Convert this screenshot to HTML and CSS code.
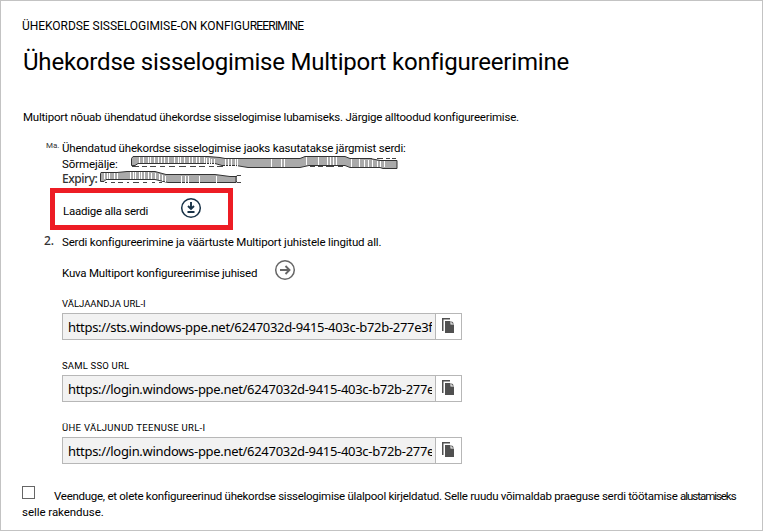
FILE: index.html
```html
<!DOCTYPE html>
<html lang="et">
<head>
<meta charset="utf-8">
<title>Multiport</title>
<link rel="stylesheet" href="styles.css">
</head>
<body>
<main class="dialog">
  <p class="eyebrow line">ÜHEKORDSE SISSELOGIMISE-ON KONFIGU<span class="tight">REERIMINE</span></p>
  <h1 class="title">Ühekordse sisselogimise Multiport konfigureerimine</h1>
  <p class="intro line">Multiport nõuab ühendatud ühekordse sisselogimise lubamiseks. Järgige alltoodud konfigureerimise.</p>
  <section class="step first">
    <span class="marker small">Ma.</span>
    <div class="content">
      <p class="line cert">Ühendatud ühekordse sisselogimise jaoks kasutatakse järgmist serdi:</p>
      <div class="row print"><span class="line">Sõrmejälje:</span>
        <svg class="scribble" width="269" height="16" viewBox="130 154 269 16">
          <path class="ink" d="M132 166.500h7m3 0h5m3 0h6m4 0h5m4 0h6m4 0h7m4 0h6m3 0h6m4 0h5m3 0h6M310 166.500h5m3 0h5m3 0h8m4 0h5M365 158.500h7m5 0h6m3 0h4m2 0h4"/>
          <path class="band" d="M133 156.500H208L220 157.500L225 158.500H300L305 156.500H345L350 158.500H370L380 160.500H397V168.500H383L380 167.500H350L345 165.500H309L300 167.500H248L236 165.500H222L215 163.500H138L135 165.500H131.500V158.500Z"/>
          <path class="bars" d="M139.500 157v6m4-6v6m5-6v6m2-6v6m4-6v6m4-6v6m3-6v6m3-6v6m4-6v6m6-6v6m4-6v6m2-6v6m4-6v6m5-6v6m3-6v6m4-6v6m3-6v6m5-6v6m2-5v6m3-6v7m2-6v6m3-6v6m11-6v7m3-7v7m3-7v7m4-7v7m2-7v8m34-8v8m10-8v8m3-8v8m22-10v8m12-8v8m9-8v8m3-8v8m3-8v8m3-8v8m15-6v8m8-8v8m5-7v7m4-7v7m4-7v7m5-6v6m3-6v6m4-6v6"/>
        </svg>
      </div>
      <div class="row expiry"><span class="line seg">Expiry:</span>
        <svg class="scribble" width="142" height="14" viewBox="100 171 142 14">
          <path class="ink" d="M105 182.500h2m4 0h4m3 0h5m4 0h2m4 0h6m4 0h4m5 0h3m4 0h3M241 175.500h-4l-1 2v3l1 2h4"/>
          <path class="band" d="M101 172.500H117L127 171.500H155L166 174.500H215L230 176.500H236V182.500H168L155 179.500H106L104 181.500H100.500V173.500Z"/>
          <path class="bars" d="M104.500 173v6m3-6v6m2-6v6m5-6v6m3-6v6m13-7v7m3-7v7m2-7v7m4-7v7m2-7v7m3-7v7m4-7v7m3-6v6m4-6v6m4-5v6m3-5v6m3-5v6m16-6v7m4-7v7m3-7v7m11-7v7m17-7v7"/>
        </svg>
      </div>
    </div>
  </section>
  <div class="download">
    <span class="line dl">Laadige alla serdi</span>
    <svg width="22" height="22" viewBox="0 0 22 22" class="round dark"><circle cx="11" cy="11" r="9.300"/><path class="bold" d="M11 5v7M8 9l3 3 3-3M7.500 15h7"/></svg>
  </div>
  <section class="step second">
    <span class="marker seg">2.</span>
    <p class="line serdi">Serdi konfigureerimine ja väärtuste Multiport juhistele lingitud all.</p>
  </section>
  <div class="guide">
    <span class="line kuva">Kuva Multiport konfigureerimise juhised</span>
    <svg width="22" height="22" viewBox="0 0 22 22" class="round gray"><circle cx="11" cy="11" r="9.300"/><path class="bold" d="M6 11h9M11.500 7l4 4-4 4"/></svg>
  </div>
  <section class="fields">
    <div class="field"><p class="label l1">VÄLJAANDJA URL-I</p>
      <div class="control"><span class="value"><span class="clip">https://sts.windows-ppe.net/6247032d-9415-403c-b72b-277e3f</span></span><span class="copy"><svg width="12" height="15" viewBox="0 0 12 15"><path d="M0 0h8v1.500H1.500V13H0Z"/><path d="M3 3h5.500v3.500H12V15H3Z"/><path d="M9.500 3 12 5.500H9.500Z"/></svg></span></div></div>
    <div class="field"><p class="label l2">SAML SSO URL</p>
      <div class="control"><span class="value"><span class="clip">https://login.windows-ppe.net/6247032d-9415-403c-b72b-277e</span></span><span class="copy"><svg width="12" height="15" viewBox="0 0 12 15"><path d="M0 0h8v1.500H1.500V13H0Z"/><path d="M3 3h5.500v3.500H12V15H3Z"/><path d="M9.500 3 12 5.500H9.500Z"/></svg></span></div></div>
    <div class="field"><p class="label l3">ÜHE VÄLJUNUD TEENUSE URL-I</p>
      <div class="control"><span class="value"><span class="clip">https://login.windows-ppe.net/6247032d-9415-403c-b72b-277e</span></span><span class="copy"><svg width="12" height="15" viewBox="0 0 12 15"><path d="M0 0h8v1.500H1.500V13H0Z"/><path d="M3 3h5.500v3.500H12V15H3Z"/><path d="M9.500 3 12 5.500H9.500Z"/></svg></span></div></div>
  </section>
  <div class="confirm">
    <span class="box"></span>
    <p class="line c1">Veenduge, et olete konfigureerinud ühekordse sisselogimise ülalpool kirjeldatud. Selle ruudu võimaldab praeguse serdi töötamise <span class="last">alustamiseks</span></p>
  </div>
  <p class="line c2">selle rakenduse.</p>
</main>
</body>
</html>
```
FILE: styles.css
```css
* { box-sizing: border-box; }
body { margin: 0; background: #fff; }
p, h1 { margin: 0; font-weight: 400; }
svg { display: block; flex: none; }
.dialog { width: 763px; height: 531px; border: 1px solid #c3c3c3; padding: 17px 0 0 21px; overflow: hidden; color: #000; font-family: Roboto, "Liberation Sans", sans-serif; }
.line { font-size: 11.5px; line-height: 16px; height: 16px; white-space: nowrap; }
.seg { font-family: "Noto Sans", "Open Sans", sans-serif; color: #333; font-weight: 500; }
.eyebrow { font-size: 12px; letter-spacing: -0.04px; }
.tight { letter-spacing: -0.8px; }
.title { margin-top: 13px; margin-left: 1px; font-size: 24px; line-height: 30px; white-space: nowrap; letter-spacing: -0.2px; }
.intro { margin-top: 32px; margin-left: 1px; letter-spacing: -0.21px; }
.step { display: flex; }
.first { margin-top: 15px; height: 48px; }
.marker { width: 40px; flex: none; padding-left: 24px; font-size: 12px; line-height: 16px; }
.small { font-size: 8px; line-height: 11px; color: #333; }
.cert { letter-spacing: -0.18px; }
.row { display: flex; height: 16px; }
.print .line { width: 68px; letter-spacing: -0.1px; }
.expiry .line { width: 38px; font-size: 12px; line-height: 14px; letter-spacing: -0.45px; }
.scribble { margin-top: -2px; }
.expiry .scribble { margin-top: -1px; }
.band { fill: #aaa; stroke: #333; stroke-width: 1; }
.bars { stroke: #fff; stroke-width: 1; fill: none; }
.ink { stroke: #444; stroke-width: 1; fill: none; }
.download { width: 183px; height: 42px; margin-left: 28px; border: 5px solid #ed1c24; display: flex; }
.dl { width: 117px; padding-left: 8px; margin-top: 10px; letter-spacing: -0.24px; }
.download svg { margin: 4px 0 0 8px; }
.round { fill: none; stroke-width: 1.5; }
.bold { stroke-width: 1.9; }
.dark { stroke: #183247; }
.gray { stroke: #666; }
.second { margin-top: 3px; height: 16px; }
.second .marker { padding-left: 22px; }
.serdi { margin-top: 1px; letter-spacing: -0.18px; }
.guide { display: flex; margin: 10px 0 0 40px; height: 22px; }
.kuva { width: 212px; margin-top: 6px; letter-spacing: -0.2px; }
.fields { margin: 17px 0 0 40px; display: grid; gap: 20px; }
.field { width: 400px; height: 42px; }
.label { height: 15px; font-size: 9.5px; line-height: 12px; white-space: nowrap; }
.l2 { letter-spacing: 0.2px; }
.l3 { letter-spacing: 0.3px; }
.control { display: flex; height: 27px; border: 1px solid #b7b7b7; }
.value { width: 373px; padding-left: 5px; background: #f2f2f2; border-right: 1px solid #b7b7b7; }
.clip { display: block; width: 364px; overflow: hidden; white-space: nowrap; font: 13px/26px "Noto Sans", "Open Sans", sans-serif; letter-spacing: -0.31px; }
.copy { flex: 1; padding: 4px 0 0 6px; }
.copy svg { fill: #505050; }
.confirm { display: flex; margin-top: 22px; }
.box { width: 13px; height: 13px; border: 1px solid #666; flex: none; }
.c1 { margin: 2px 0 0 19px; letter-spacing: -0.27px; }
.last { letter-spacing: -1.05px; }
.c2 { letter-spacing: -0.05px; }
```
